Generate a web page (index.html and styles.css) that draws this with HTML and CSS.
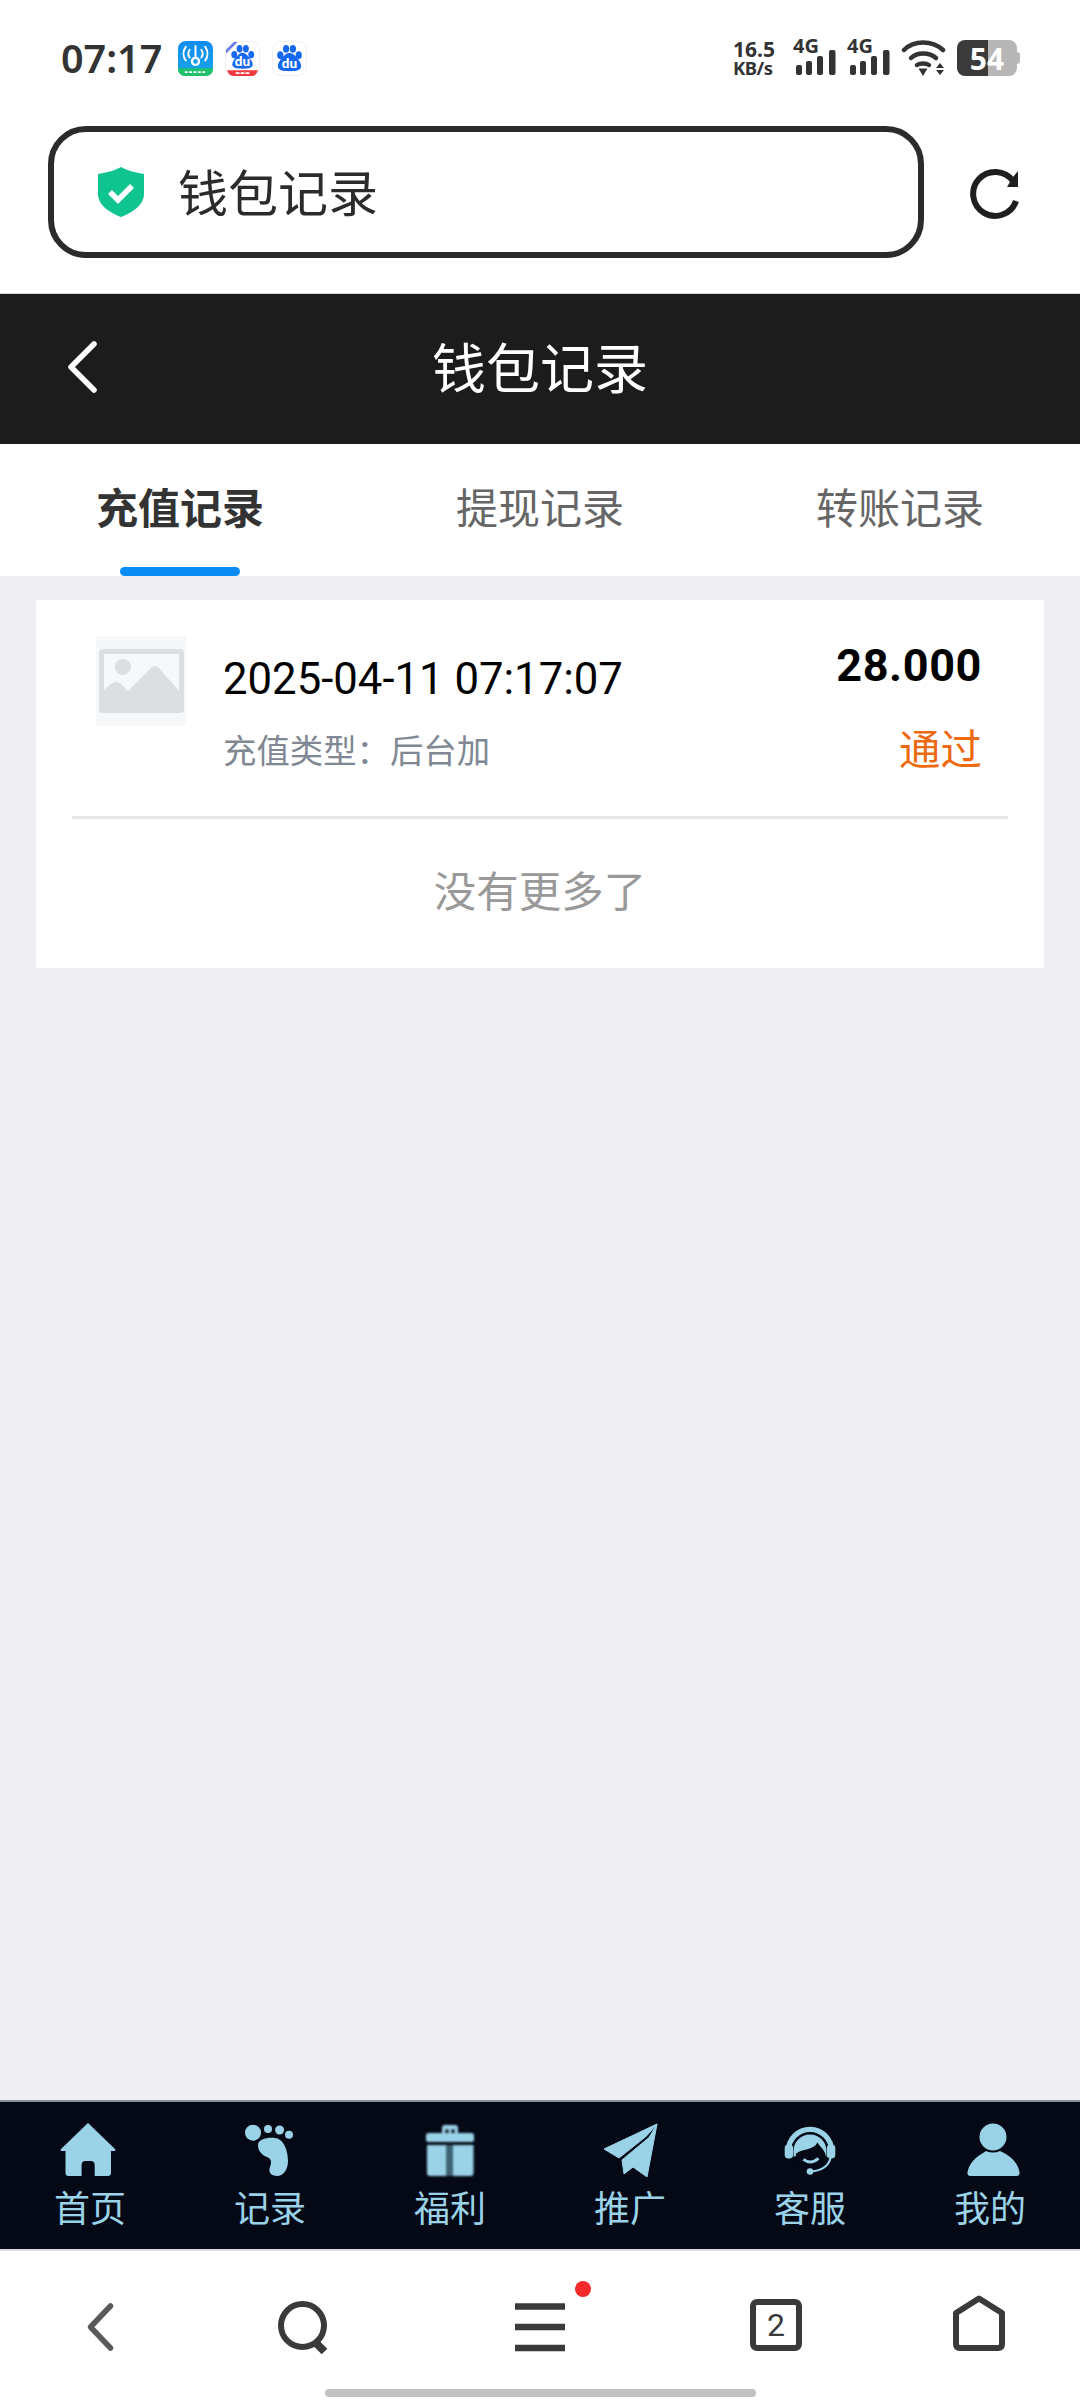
FILE: index.html
```html
<!DOCTYPE html>
<html lang="zh-CN">
<head>
  <meta charset="UTF-8" />
  <meta name="viewport" content="width=device-width, initial-scale=1.0"/>
  <title>钱包记录</title>
  <link rel="stylesheet" href="styles.css">
</head>
<body>
  <div class="page">

    <div class="status-bar">
      <span class="clock">07:17</span>
      <div class="notify-icons">
        <svg class="app-icon" viewBox="0 0 36 36">
          <defs>
            <linearGradient id="wifiBg" x1="0" y1="0" x2="0" y2="1">
              <stop offset="0" stop-color="#0f8cf0"/>
              <stop offset="1" stop-color="#1aa6e8"/>
            </linearGradient>
          </defs>
          <rect width="36" height="36" rx="8" fill="url(#wifiBg)"/>
          <path d="M0 28 H36 V29 A7 7 0 0 1 29 36 H7 A7 7 0 0 1 0 29 Z" fill="#1fc26a"/>
          <g fill="none" stroke="#fff" stroke-width="2" stroke-linecap="round">
            <path d="M8 6 A12 12 0 0 0 8 20"/>
            <path d="M28 6 A12 12 0 0 1 28 20"/>
            <path d="M12 9 A7 7 0 0 0 12 17"/>
            <path d="M24 9 A7 7 0 0 1 24 17"/>
            <path d="M18 5 V17"/>
            <circle cx="18" cy="21" r="3.6" stroke-width="2.4"/>
          </g>
          <path d="M7 32 H29" stroke="#fff" stroke-width="2" stroke-dasharray="3 1.5"/>
        </svg>
        <svg class="app-icon" viewBox="0 0 36 36">
          <rect x="0.5" y="0.5" width="35" height="35" rx="8" fill="#fff" stroke="#eceef2"/>
          <path d="M1 9 L9 1 H13 L1 13 Z" fill="#6d7cf0"/>
          <g fill="#1668f0">
            <ellipse cx="9.5" cy="14" rx="3" ry="3.8"/>
            <ellipse cx="15" cy="8" rx="3" ry="3.8"/>
            <ellipse cx="21.5" cy="8" rx="3" ry="3.8"/>
            <ellipse cx="27" cy="14" rx="3" ry="3.8"/>
            <path d="M18 12 C22 12 28.5 20 28.5 24 C28.5 28 24 28.5 18 28.5 C12 28.5 7.5 28 7.5 24 C7.5 20 14 12 18 12 Z"/>
          </g>
          <text x="18" y="26" class="du-text" text-anchor="middle">du</text>
          <path d="M2 30 H34 L32 34 Q30 36 27 36 H9 Q6 36 4 34 Z" fill="#f13a3f"/>
          <path d="M11 33 H25" stroke="#fff" stroke-width="1.8" stroke-dasharray="4 1"/>
        </svg>
        <svg class="app-icon" viewBox="0 0 36 36">
          <rect x="0.5" y="0.5" width="35" height="35" rx="8" fill="#fff" stroke="#eceef2"/>
          <g fill="#1668f0">
            <ellipse cx="8.5" cy="14.5" rx="3.2" ry="4"/>
            <ellipse cx="14.5" cy="8" rx="3.2" ry="4"/>
            <ellipse cx="21.5" cy="8" rx="3.2" ry="4"/>
            <ellipse cx="27.5" cy="14.5" rx="3.2" ry="4"/>
            <path d="M18 12 C22.5 12 30 21 30 25.5 C30 30.5 25 31 18 31 C11 31 6 30.5 6 25.5 C6 21 13.5 12 18 12 Z"/>
          </g>
          <text x="18" y="28" class="du-text" text-anchor="middle">du</text>
        </svg>
      </div>
      <div class="status-right">
        <div class="net-speed"><span>16.5</span><span class="unit">KB/s</span></div>
        <svg class="signal" viewBox="0 0 44 58">
          <text x="0" y="24" class="signal-text">4G</text>
          <rect x="3" y="36" width="6" height="10" rx="2"/>
          <rect x="13" y="32" width="6" height="14" rx="2"/>
          <rect x="24" y="27" width="6" height="19" rx="2"/>
          <rect x="36" y="21" width="6.5" height="25" rx="2"/>
        </svg>
        <svg class="signal" viewBox="0 0 44 58">
          <text x="0" y="24" class="signal-text">4G</text>
          <rect x="3" y="36" width="6" height="10" rx="2"/>
          <rect x="13" y="32" width="6" height="14" rx="2"/>
          <rect x="24" y="27" width="6" height="19" rx="2"/>
          <rect x="36" y="21" width="6.5" height="25" rx="2"/>
        </svg>
        <svg class="wifi" viewBox="0 0 46 38">
          <g fill="none" stroke="#333" stroke-width="4.5" stroke-linecap="round">
            <path d="M3 11 C13 1 31 1 42 11"/>
            <path d="M10 19 C16 13 28 13 35 19"/>
            <path d="M16 26 C19 24 25 24 28 26"/>
          </g>
          <path d="M17.5 29.5 H26.5 L22 37 Z" fill="#333"/>
          <path d="M35 29 L39 24 L43 29 Z M35 31 H43 L39 36 Z" fill="#333"/>
        </svg>
        <div class="battery"><span>54</span></div>
      </div>
    </div>

    <div class="url-row">
      <div class="url-box">
        <svg class="shield" viewBox="0 0 46 50">
          <path d="M23 0 C28 3 35 5 46 7 V27 C46 38 34 46 23 50 C12 46 0 38 0 27 V7 C11 5 18 3 23 0 Z" fill="#10c48f"/>
          <path d="M12 25 L20 33 L34 19" fill="none" stroke="#fff" stroke-width="5.5"/>
        </svg>
        <span class="url-text">钱包记录</span>
      </div>
      <svg class="reload" viewBox="0 0 52 52">
        <path d="M47 33 A22 22 0 1 1 44 13" fill="none" stroke="#1f1f1f" stroke-width="6"/>
        <path d="M44 9 L49 3 V19 H38 Z" fill="#1f1f1f"/>
      </svg>
    </div>

    <div class="header">
      <svg class="back" viewBox="0 0 36 52">
        <path d="M30 3 L7 26 L30 49" fill="none" stroke="#fff" stroke-width="5.5" stroke-linecap="round" stroke-linejoin="round"/>
      </svg>
      <h1 class="header-title">钱包记录</h1>
    </div>

    <div class="tabs">
      <div class="tab active">充值记录</div>
      <div class="tab">提现记录</div>
      <div class="tab">转账记录</div>
    </div>

    <div class="content">
      <div class="card">
        <div class="record">
          <div class="thumb">
            <svg viewBox="0 0 85 64">
              <rect width="85" height="64" rx="4" fill="#dcdee0"/>
              <path d="M5 5 H80 V42 L60 19 Q56 15 52 19 L29 42 L22 35 Q17 31 12 35 L5 41 Z" fill="#f7f8fa"/>
              <circle cx="24" cy="18" r="8" fill="#dcdee0"/>
            </svg>
          </div>
          <div class="record-info">
            <div class="record-date">2025-04-11 07:17:07</div>
            <div class="record-type">充值类型：后台加</div>
          </div>
          <div class="record-side">
            <div class="record-amount">28.000</div>
            <div class="record-state">通过</div>
          </div>
        </div>
        <div class="divider"></div>
        <div class="no-more">没有更多了</div>
      </div>
    </div>

    <div class="tabbar">
      <div class="tabbar-item">
        <svg viewBox="0 0 60 54">
          <path d="M28 0 L55 26 Q56 28 54 28 H51 V50 Q51 53 48 53 H34.7 V42 Q34.7 38 30.7 38 H25.6 Q21.6 38 21.6 42 V53 H8.5 Q5.5 53 5.5 50 V28 H2 Q0 28 1 26 Z"/>
        </svg>
        <span>首页</span>
      </div>
      <div class="tabbar-item">
        <svg viewBox="0 0 60 54">
          <circle cx="13" cy="9.7" r="8"/>
          <circle cx="28" cy="6" r="4"/>
          <circle cx="39.6" cy="7" r="4.5"/>
          <circle cx="49" cy="11.7" r="4"/>
          <path d="M18 22 C18 16 28 14 35 15 C44 16 48 28 48 38 C48 47 43 53 37 53 C31 53 28 49 30 44 C32 38 31 36 27 34 C22 32 18 28 18 22 Z"/>
        </svg>
        <span>记录</span>
      </div>
      <div class="tabbar-item">
        <svg class="soft" viewBox="0 0 60 54">
          <path d="M22 10 V5 Q22 2 25 2 H35 Q38 2 38 5 V10 H34.5 V6.5 H31.5 V10 H28.5 V6.5 H25.5 V10 Z"/>
          <rect x="6" y="10" width="48" height="9" rx="2.5"/>
          <path d="M7 22 H26.5 V53 H10 Q7 53 7 50 Z"/>
          <path d="M33 22 H53.5 V50 Q53.5 53 50.5 53 H33 Z"/>
          <rect x="26.5" y="22" width="6.5" height="31" fill="#3d6373"/>
        </svg>
        <span>福利</span>
      </div>
      <div class="tabbar-item">
        <svg viewBox="0 0 60 54">
          <path d="M57 1 L4 26 L19 35 L46 13.5 Z" stroke="#9ad3e8" stroke-linejoin="round"/>
          <path d="M57 1 L49 14.5 L22 37 L24 51 L33 44 L47 54 Z" stroke="#9ad3e8" stroke-linejoin="round"/>
        </svg>
        <span>推广</span>
      </div>
      <div class="tabbar-item">
        <svg viewBox="0 0 64 54">
          <path d="M9 28 A23 23 0 0 1 55 28" fill="none" stroke="#9ad3e8" stroke-width="5.5"/>
          <path d="M14.5 34 V28 A17.5 17.5 0 0 1 49.5 28 V34 Z"/>
          <rect x="5" y="21" width="9" height="15" rx="4"/>
          <rect x="50" y="21" width="9" height="15" rx="4"/>
          <!-- hair and face cut out of the headset -->
          <path d="M17 31 C24 25 35 28 40 19 C43 24 49 28 49 35 C49 43 41 47 32 47 C23 47 15 42 17 31 Z" fill="#050815"/>
          <path d="M25 37 Q33 43 41 36" fill="none" stroke="#9ad3e8" stroke-width="3.2"/>
          <path d="M54 35 C52 44 44 49 33 50" fill="none" stroke="#9ad3e8" stroke-width="2.2"/>
          <circle cx="32" cy="50" r="3.5"/>
        </svg>
        <span>客服</span>
      </div>
      <div class="tabbar-item">
        <svg viewBox="0 0 60 54">
          <circle cx="33" cy="14" r="13.5"/>
          <path d="M7.5 49 C10 36 22 31 26 28 Q33 31 40 28 C46 31 57 36 59.5 49 Q60 53 56.5 53 H10.5 Q7 53 7.5 49 Z"/>
        </svg>
        <span>我的</span>
      </div>
    </div>

    <div class="browser-nav">
      <div class="nav-row">
        <div class="nav-item">
          <svg viewBox="0 0 60 60">
            <path d="M40.5 11 L20.5 32 L40.5 53" fill="none" stroke="#5a5a5a" stroke-width="5.5" stroke-linecap="round" stroke-linejoin="round"/>
          </svg>
        </div>
        <div class="nav-item">
          <svg viewBox="0 0 60 60">
            <circle cx="28.5" cy="30.5" r="21.5" fill="none" stroke="#3a3a3a" stroke-width="6"/>
            <path d="M41 47 L50.5 56.5" fill="none" stroke="#3a3a3a" stroke-width="8"/>
          </svg>
        </div>
        <div class="nav-item">
          <div class="menu-wrap">
            <svg viewBox="0 0 60 60">
              <path d="M5 11.5 H55 M5 32 H55 M5 53 H55" fill="none" stroke="#3a3a3a" stroke-width="6.5"/>
            </svg>
            <span class="dot"></span>
          </div>
        </div>
        <div class="nav-item">
          <svg viewBox="0 0 60 60">
            <rect x="7" y="7" width="46" height="46" rx="4" fill="none" stroke="#3a3a3a" stroke-width="6"/>
            <text x="30" y="41" class="tab-count" text-anchor="middle">2</text>
          </svg>
        </div>
        <div class="nav-item">
          <svg viewBox="0 0 60 60">
            <path d="M30 3.5 L53 18 V49 Q53 53 49 53 H11 Q7 53 7 49 V18 Z" fill="none" stroke="#3a3a3a" stroke-width="6" stroke-linejoin="round"/>
          </svg>
        </div>
      </div>
      <div class="home-bar"></div>
    </div>

  </div>
</body>
</html>
```

FILE: styles.css
```css
body {
  margin: 0;
  font-family: Roboto, "Noto Sans CJK SC", sans-serif;
  color: #1f1f1f;
}
.page {
  width: 1080px;
  height: 2400px;
  display: flex;
  flex-direction: column;
  background-color: #eeeef3;
  overflow: hidden;
}

/* status bar */
.status-bar {
  height: 116px;
  box-sizing: border-box;
  padding: 0 60px 0 61px;
  display: flex;
  align-items: center;
  background-color: #fff;
}
.clock {
  font-family: "Noto Sans", sans-serif;
  font-size: 39.5px;
  font-weight: 600;
  color: #333;
  width: 117px;
}
.notify-icons {
  display: flex;
  gap: 12px;
}
.app-icon {
  width: 35px;
  height: 35px;
}
.du-text {
  font-family: Roboto, sans-serif;
  font-size: 14px;
  font-weight: 700;
  fill: #fff;
}
.status-right {
  margin-left: auto;
  display: flex;
  align-items: center;
  gap: 10px;
}
.net-speed {
  display: flex;
  flex-direction: column;
  width: 44px;
  margin-right: 6px;
  font-family: "Noto Sans", sans-serif;
  font-size: 21px;
  line-height: 20px;
  font-weight: 700;
  color: #333;
}
.net-speed .unit {
  font-size: 18.5px;
  line-height: 18px;
  letter-spacing: -0.5px;
}
.signal {
  width: 44px;
  height: 58px;
  fill: #333;
}
.signal-text {
  font-family: "Noto Sans", sans-serif;
  font-size: 20px;
  font-weight: 700;
}
.wifi {
  width: 46px;
  height: 38px;
}
.battery {
  position: relative;
  width: 60px;
  height: 36px;
  margin-right: 3px;
  border-radius: 8px;
  background: linear-gradient(90deg, #3a3a3a 52%, #b7b7b7 52%);
  display: flex;
  align-items: center;
  justify-content: center;
  color: #fff;
  font-family: "Noto Sans", sans-serif;
  font-size: 30px;
  font-weight: 700;
}
.battery::after {
  content: "";
  position: absolute;
  right: -3px;
  top: 12px;
  width: 3px;
  height: 12px;
  border-radius: 0 3px 3px 0;
  background-color: #b7b7b7;
}

/* address bar */
.url-row {
  height: 177px;
  box-sizing: border-box;
  padding: 10px 0 0 48px;
  display: flex;
  align-items: flex-start;
  background-color: #fff;
}
.url-box {
  width: 876px;
  height: 132px;
  box-sizing: border-box;
  padding-left: 44px;
  display: flex;
  align-items: center;
  gap: 34px;
  border: 6px solid #2b2b2b;
  border-radius: 38px;
}
.shield {
  width: 46px;
  height: 50px;
}
.url-text {
  padding-bottom: 5px;
  font-size: 50px;
  color: #2b2b2b;
}
.reload {
  width: 52px;
  height: 52px;
  margin: 42px 0 0 45px;
}

/* page header */
.header {
  height: 151px;
  box-sizing: border-box;
  padding: 0 0 4px 64px;
  display: flex;
  align-items: center;
  position: relative;
  background-color: #1c1c1c;
  border-top: 1px solid #d5d5d5;
}
.back {
  width: 36px;
  height: 52px;
}
.header-title {
  position: absolute;
  left: 0;
  right: 0;
  margin: 0;
  padding-bottom: 4px;
  text-align: center;
  font-size: 54px;
  font-weight: 400;
  color: #fff;
}

/* record type tabs */
.tabs {
  height: 132px;
  display: grid;
  grid-template-columns: repeat(3, 1fr);
  background-color: #fff;
}
.tab {
  position: relative;
  display: flex;
  justify-content: center;
  padding-top: 37px;
  font-size: 42px;
  line-height: 58px;
  color: #666;
}
.tab.active {
  color: #333;
  font-weight: 700;
}
.tab.active::after {
  content: "";
  position: absolute;
  bottom: 0;
  left: 120px;
  width: 120px;
  height: 9px;
  border-radius: 5px;
  background-color: #0a8cf5;
}

.content {
  flex: 1;
  padding: 24px 36px 0;
}
.card {
  height: 368px;
  background-color: #fff;
}
.record {
  height: 216px;
  box-sizing: border-box;
  padding: 36px 62px 0 60px;
  display: flex;
  align-items: flex-start;
}
.thumb {
  width: 90px;
  height: 90px;
  display: flex;
  align-items: center;
  justify-content: center;
  background-color: #f6f7f9;
}
.thumb svg {
  width: 85px;
  height: 64px;
}
.record-info {
  flex: 1;
  padding: 21px 0 0 37px;
}
.record-date {
  font-size: 43.7px;
  line-height: 44px;
  color: #000;
}
.record-type {
  margin-top: 29px;
  font-size: 33.4px;
  line-height: 44px;
  color: #808893;
}
.record-side {
  padding-top: 8px;
  text-align: right;
}
.record-amount {
  font-size: 45px;
  line-height: 44px;
  letter-spacing: 0.6px;
  font-weight: 700;
  color: #000;
}
.record-state {
  margin-top: 41px;
  font-size: 41.5px;
  line-height: 44px;
  color: #ee6a10;
}
.divider {
  height: 3px;
  margin: 0 36px;
  background-color: #e6e7ea;
}
.no-more {
  padding-top: 46px;
  text-align: center;
  font-size: 42.5px;
  line-height: 56px;
  color: #999;
}

/* bottom site menu */
.tabbar {
  height: 149px;
  box-sizing: border-box;
  padding-top: 21px;
  display: grid;
  grid-template-columns: repeat(6, 1fr);
  background-color: #050815;
  border-top: 2px solid #8c8e92;
}
.tabbar-item {
  display: flex;
  flex-direction: column;
  align-items: center;
  color: #9ad3e8;
  font-size: 36px;
  line-height: 40px;
}
.tabbar-item svg {
  width: 60px;
  height: 54px;
  margin-bottom: 13px;
  fill: #9ad3e8;
}
.tabbar-item svg.soft {
  filter: blur(0.8px);
}

/* browser toolbar */
.browser-nav {
  height: 151px;
  box-sizing: border-box;
  display: flex;
  flex-direction: column;
  background-color: #fff;
  border-top: 2px solid #d8dbe0;
}
.nav-row {
  height: 138px;
  display: grid;
  grid-template-columns: 199px 210px 262px 210px 196px;
}
.nav-item {
  display: flex;
  justify-content: center;
  padding-top: 44px;
}
.nav-item svg {
  width: 60px;
  height: 60px;
  display: block;
}
.menu-wrap {
  position: relative;
  width: 60px;
  height: 60px;
}
.dot {
  position: absolute;
  left: 65px;
  top: -14px;
  width: 16px;
  height: 16px;
  border-radius: 50%;
  background-color: #f52a2a;
}
.tab-count {
  font-family: Roboto, sans-serif;
  font-size: 32px;
  fill: #3a3a3a;
}
.home-bar {
  width: 431px;
  height: 8px;
  margin: 0 auto;
  border-radius: 4px;
  background-color: #c2c2c2;
}
```
